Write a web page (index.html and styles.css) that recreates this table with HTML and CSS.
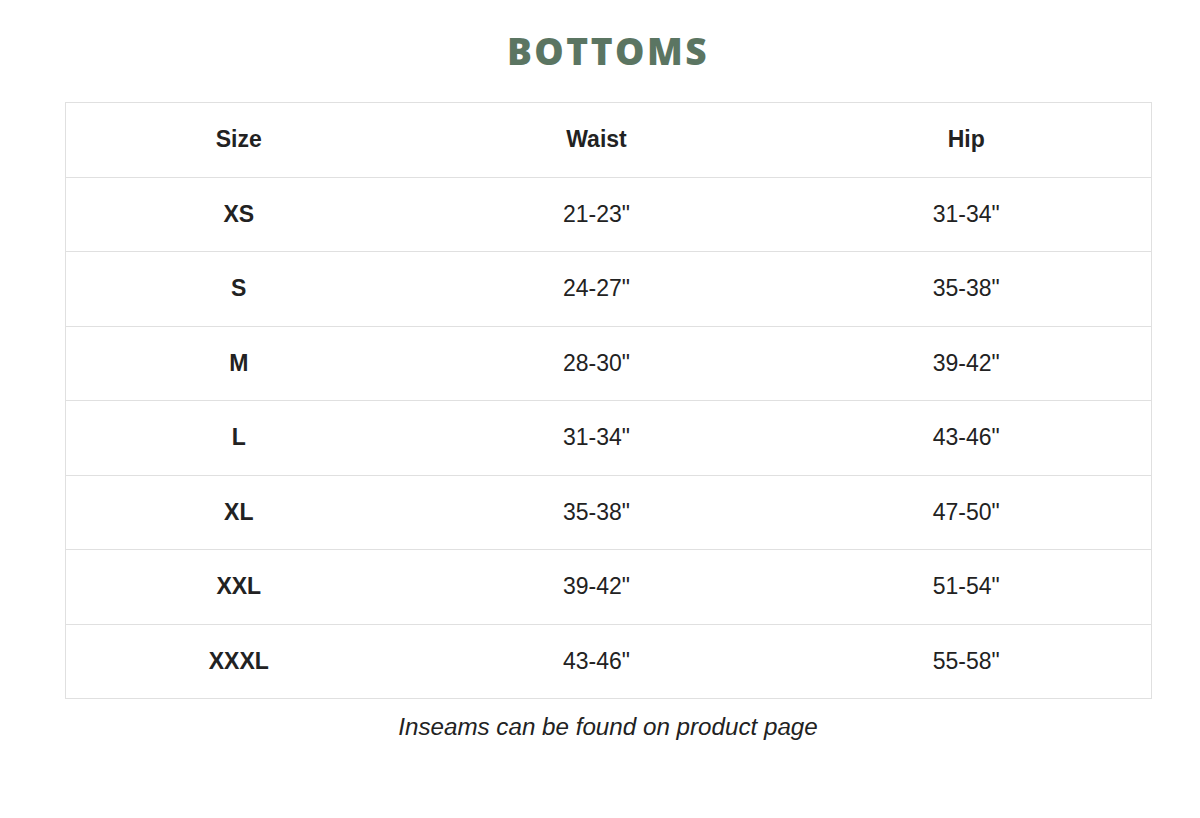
FILE: index.html
```html
<!DOCTYPE html>
<html>
<head>
<meta charset="utf-8">
<link rel="stylesheet" href="styles.css">
</head>
<body>
<div class="page">
  <h1 class="title">BOTTOMS</h1>
  <table class="size-table">
    <colgroup>
      <col class="c1"><col class="c2"><col class="c3">
    </colgroup>
    <thead>
      <tr><th>Size</th><th>Waist</th><th>Hip</th></tr>
    </thead>
    <tbody>
      <tr><th>XS</th><td>21-23"</td><td>31-34"</td></tr>
      <tr><th>S</th><td>24-27"</td><td>35-38"</td></tr>
      <tr><th>M</th><td>28-30"</td><td>39-42"</td></tr>
      <tr><th>L</th><td>31-34"</td><td>43-46"</td></tr>
      <tr><th>XL</th><td>35-38"</td><td>47-50"</td></tr>
      <tr><th>XXL</th><td>39-42"</td><td>51-54"</td></tr>
      <tr><th>XXXL</th><td>43-46"</td><td>55-58"</td></tr>
    </tbody>
  </table>
  <p class="note">Inseams can be found on product page</p>
</div>
</body>
</html>
```

FILE: styles.css
```css
html, body {
  margin: 0;
  padding: 0;
  background: #ffffff;
}
.page {
  width: 1086px;
  margin-left: 65px;
  padding-top: 26px;
  font-family: "Liberation Sans", Arial, sans-serif;
  color: #222222;
}
.title {
  margin: 0 0 26px 0;
  text-align: center;
  font-family: "Open Sans", sans-serif;
  font-weight: 800;
  font-size: 37px;
  line-height: 50px;
  letter-spacing: 2.5px;
  color: #5b7562;
}
.size-table {
  width: 1086px;
  border-collapse: collapse;
  border: 1px solid #e0e0e0;
  table-layout: fixed;
}
.c1 { width: 346px; }
.c2 { width: 370px; }
.c3 { width: 370px; }
.size-table th,
.size-table td {
  height: 73.5px;
  padding: 0;
  text-align: center;
  vertical-align: middle;
  font-size: 23px;
  border-bottom: 1px solid #e0e0e0;
}
.size-table th { font-weight: 700; }
.size-table td { font-weight: 400; }
.note {
  margin: 12px 0 0 0;
  text-align: center;
  font-style: italic;
  font-size: 24.2px;
  line-height: 32px;
}
```
